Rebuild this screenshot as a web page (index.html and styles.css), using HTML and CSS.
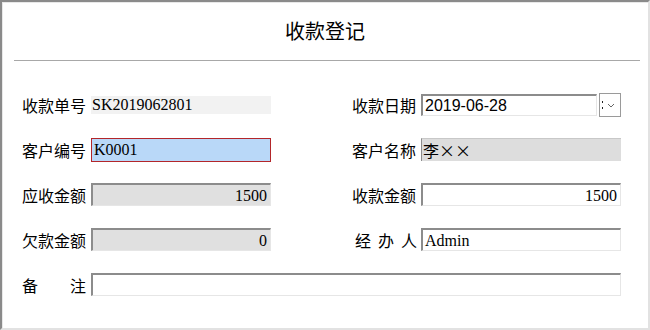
FILE: index.html
```html
<!DOCTYPE html>
<html lang="zh-CN">
<head>
    <meta charset="utf-8">
    <link rel="stylesheet" href="styles.css">
    <title>收款登记</title>
</head>
<body>
    <div class="window">
        <h1 class="title">收款登记</h1>
        <hr class="divider">

        <div class="form">
            <div class="cell">
                <span class="label">收款单号</span>
                <span class="value flat">SK2019062801</span>
            </div>
            <div class="cell">
                <span class="label">收款日期</span>
                <span class="value sunken date-text">2019-06-28</span>
                <span class="drop">
                    <svg width="20" height="22" viewBox="0 0 20 22">
                        <rect x="2" y="7" width="1" height="2" fill="#222"/>
                        <rect x="2" y="13" width="1" height="2" fill="#222"/>
                        <polyline points="8,10 11,13 14,10" fill="none" stroke="#666" stroke-width="1"/>
                    </svg>
                </span>
            </div>

            <div class="cell">
                <span class="label">客户编号</span>
                <span class="value focus">K0001</span>
            </div>
            <div class="cell">
                <span class="label">客户名称</span>
                <span class="value readonly cjk">李××</span>
            </div>

            <div class="cell">
                <span class="label">应收金额</span>
                <span class="value sunken gray num">1500</span>
            </div>
            <div class="cell">
                <span class="label">收款金额</span>
                <span class="value sunken num">1500</span>
            </div>

            <div class="cell">
                <span class="label">欠款金额</span>
                <span class="value sunken gray num">0</span>
            </div>
            <div class="cell">
                <span class="label spread shift"><span>经</span><span>办</span><span>人</span></span>
                <span class="value sunken">Admin</span>
            </div>

            <div class="cell full">
                <span class="label spread"><span>备</span><span>注</span></span>
                <span class="value sunken"></span>
            </div>
        </div>
    </div>
</body>
</html>
```

FILE: styles.css
```css
body {
    margin: 0;
    background: #fff;
    font-family: "Noto Sans CJK SC", sans-serif;
    color: #000;
}

.window {
    width: 650px;
    height: 330px;
    box-sizing: border-box;
    border-style: solid;
    border-width: 2px;
    border-color: #8a8a8a #e2e2e2 #e2e2e2 #8a8a8a;
    box-shadow: inset 1px 1px 0 #e8e8e8;
    background: #fff;
}

.title {
    margin: 0;
    padding-top: 19px;
    font-size: 20px;
    line-height: 20px;
    font-weight: normal;
    text-align: center;
}

.divider {
    height: 1px;
    border: none;
    background: #a8a8a8;
    margin: 19px 8px 0 12px;
}

.form {
    display: grid;
    grid-template-columns: 249px 269px;
    grid-auto-rows: 23px;
    column-gap: 81px;
    row-gap: 22px;
    margin-top: 32px;
    padding-left: 20px;
}

.cell {
    display: flex;
    align-items: center;
}

.full {
    grid-column: 1 / -1;
}

.label {
    width: 64px;
    flex: none;
    margin-right: 5px;
    font-size: 16px;
    line-height: 20px;
    white-space: nowrap;
}

.spread {
    display: flex;
    justify-content: space-between;
}

.shift {
    width: 62px;
    padding-left: 3px;
    margin-right: 4px;
}

.value {
    flex: 1;
    height: 23px;
    box-sizing: border-box;
    padding: 0 3px 0 2px;
    font-family: "Liberation Serif", "Noto Sans CJK SC", serif;
    font-size: 16px;
    line-height: 19px;
    display: flex;
    align-items: center;
    white-space: nowrap;
    overflow: hidden;
}

.flat {
    height: 18px;
    background: #f2f2f2;
    padding-left: 1px;
}

.sunken {
    border-style: solid;
    border-width: 2px 1px 1px 2px;
    border-color: #8c8c8c #e6e6e6 #e6e6e6 #8c8c8c;
    background: #fff;
}

.gray {
    background: #e0e0e0;
}

.num {
    justify-content: flex-end;
}

.focus {
    height: 24px;
    border: 1px solid #b3262a;
    background: #b9d8f8;
    padding-left: 2px;
}

.readonly {
    border-left: 1px solid #8c8c8c;
    border-top: 1px solid #c8c8c8;
    background: #dddddd;
    padding-left: 1px;
}

.cjk {
    font-family: "Noto Sans CJK SC", sans-serif;
}

.date-text {
    height: 22px;
    font-family: "Liberation Sans", sans-serif;
    font-size: 16px;
}

.drop {
    flex: none;
    width: 22px;
    height: 24px;
    box-sizing: border-box;
    margin-left: 2px;
    border: 1px solid #9a9a9a;
    background: #fff;
}

.drop svg {
    display: block;
}
```
